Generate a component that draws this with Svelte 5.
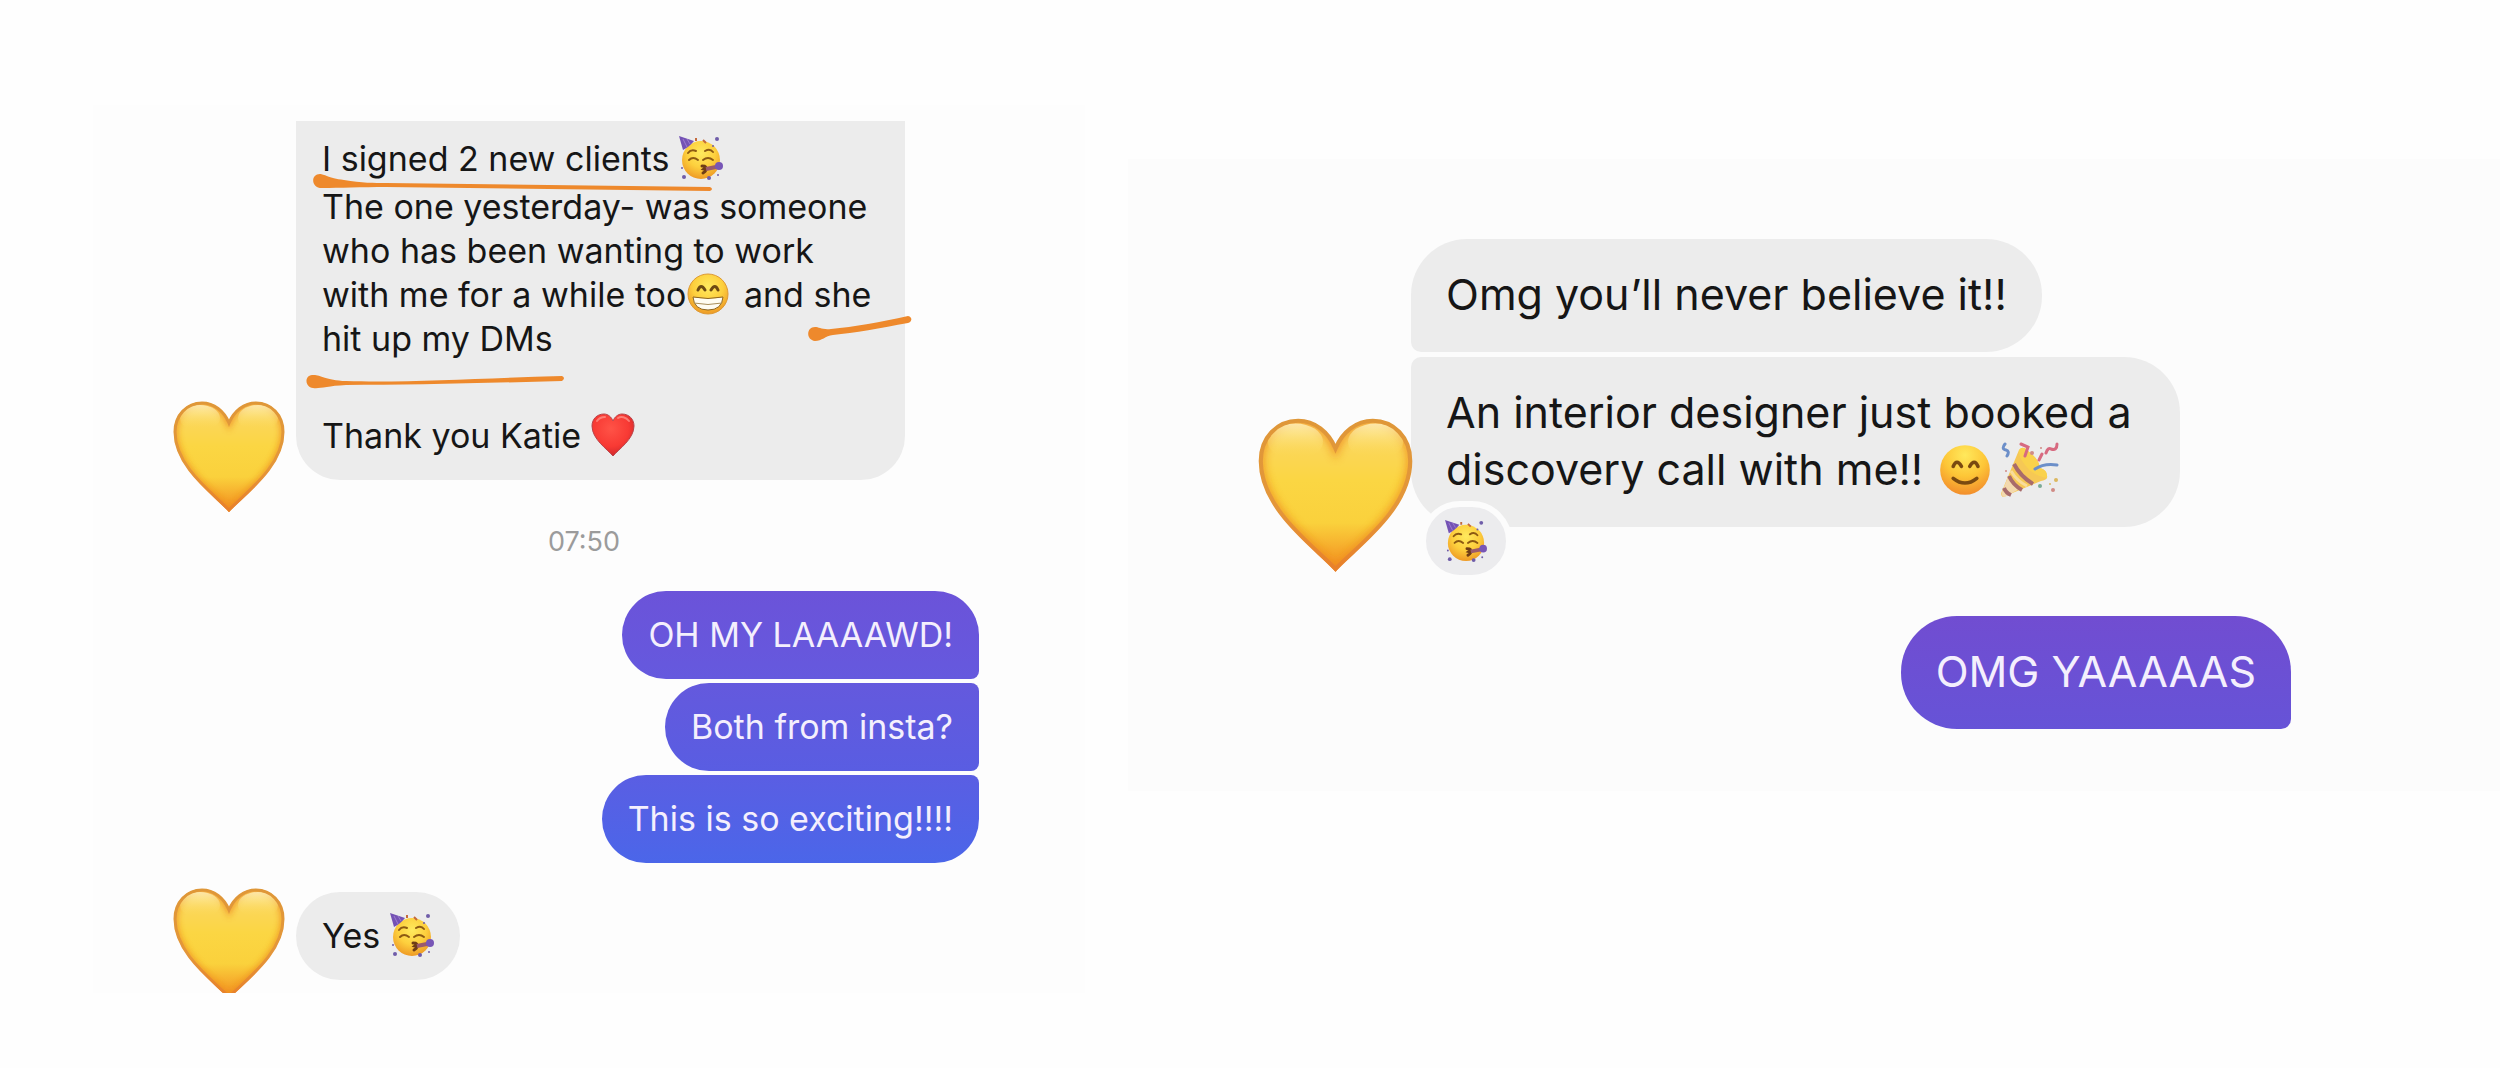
<script>
  const sent = [
    { text: 'OH MY LAAAAWD!', tone: 'violet' },
    { text: 'Both from insta?', tone: 'indigo' },
    { text: 'This is so exciting!!!!', tone: 'blue' },
  ];
</script>

{#snippet defs()}
  <svg class="defs" width="0" height="0" aria-hidden="true">
    <defs>
      <linearGradient id="gold" x1="0" y1="0" x2="0" y2="1">
        <stop offset="0" stop-color="#fbd66b" />
        <stop offset="0.4" stop-color="#fbd643" />
        <stop offset="0.68" stop-color="#fad13c" />
        <stop offset="1" stop-color="#f28a1e" />
      </linearGradient>
      <linearGradient id="goldEdge" x1="0" y1="0" x2="0" y2="1">
        <stop offset="0" stop-color="#df9738" />
        <stop offset="0.6" stop-color="#e4963a" />
        <stop offset="1" stop-color="#e8802a" />
      </linearGradient>
      <linearGradient id="shine" x1="0" y1="0" x2="0" y2="1">
        <stop offset="0" stop-color="#fff4c4" stop-opacity="0.8" />
        <stop offset="1" stop-color="#fbd643" stop-opacity="0" />
      </linearGradient>
      <radialGradient id="red" cx="0.45" cy="0.35" r="0.7">
        <stop offset="0" stop-color="#ff5347" />
        <stop offset="0.6" stop-color="#f83a34" />
        <stop offset="1" stop-color="#c9252a" />
      </radialGradient>
      <radialGradient id="face" cx="0.5" cy="0.32" r="0.68">
        <stop offset="0" stop-color="#ffea5e" />
        <stop offset="0.55" stop-color="#fdcf3d" />
        <stop offset="1" stop-color="#ee9a25" />
      </radialGradient>
      <radialGradient id="blush" cx="0.5" cy="0.2" r="0.85">
        <stop offset="0" stop-color="#ffe95c" />
        <stop offset="0.5" stop-color="#fdc637" />
        <stop offset="1" stop-color="#f1862a" />
      </radialGradient>
      <filter id="soft" x="-10%" y="-10%" width="120%" height="120%">
        <feGaussianBlur stdDeviation="3" />
      </filter>
      <clipPath id="heartClip">
        <path d="M56 111C41 94 2 66 2 31C2 13 14 1 29 1C41 1 51 9 56 21C61 9 71 1 83 1C98 1 110 13 110 31C110 66 71 94 56 111Z" />
      </clipPath>
    </defs>
  </svg>
{/snippet}

{#snippet goldHeart()}
  <svg class="avatar" viewBox="0 0 112 112" role="img" aria-label="Yellow heart">
    <path fill="url(#gold)" d="M56 111C41 94 1 66 1 31C1 13 14 1 29 1C41 1 51 9 56 21C61 9 71 1 83 1C98 1 111 13 111 31C111 66 71 94 56 111Z" />
    <g clip-path="url(#heartClip)">
      <path fill="none" stroke="#ee8b1d" stroke-width="7" opacity="0.8" filter="url(#soft)" d="M56 111C41 94 1 66 1 31C1 13 14 1 29 1C41 1 51 9 56 21C61 9 71 1 83 1C98 1 111 13 111 31C111 66 71 94 56 111Z" />
      <ellipse cx="27" cy="17" rx="20" ry="13" fill="url(#shine)" />
      <ellipse cx="85" cy="17" rx="20" ry="13" fill="url(#shine)" />
    </g>
    <path fill="none" stroke="url(#goldEdge)" stroke-width="3" d="M56 109C41 93 2 66 2 31C2 14 14 2 29 2C41 2 51 10 56 22C61 10 71 2 83 2C98 2 110 14 110 31C110 66 71 93 56 109Z" />
  </svg>
{/snippet}

{#snippet redHeart()}
  <svg class="emoji" viewBox="0 0 44 44" role="img" aria-label="Red heart">
    <path fill="url(#red)" stroke="#b9444a" stroke-width="1" d="M22 43C16 36 1 26 1 13C1 6 6 1 13 1C17 1 20.500 4 22 8C23.500 4 27 1 31 1C38 1 43 6 43 13C43 26 28 36 22 43Z" />
    <path fill="none" stroke="#ff9a90" stroke-width="2" stroke-linecap="round" opacity="0.7" d="M6 8C8 5 11 4 14 4M27 5C30 3 35 4 38 8" />
  </svg>
{/snippet}

{#snippet party()}
  <svg class="emoji" viewBox="0 0 44 44" role="img" aria-label="Partying face">
    <circle cx="22" cy="24" r="19" fill="url(#face)" />
    <path fill="#7452b4" d="M0 0L15 5C12 9 8 12 4 14Z" />
    <path fill="none" stroke="#9c7bd0" stroke-width="1" d="M4 3L8 11M8 3L11 8" />
    <path fill="none" stroke="#8d5a12" stroke-width="2" stroke-linecap="round" d="M9 17Q12 13 17 15M26 15Q31 12 34 16M10 24Q14 20 19 24M24 24Q29 20 34 24" />
    <path fill="none" stroke="#6f3d16" stroke-width="3" stroke-linecap="round" d="M23 30Q29 30 25 33Q29 34 24 37" />
    <path fill="none" stroke="#9b5a6c" stroke-width="4" d="M27 33L37 31" />
    <circle cx="40" cy="30" r="4" fill="#7856b6" />
    <path stroke="#c46a3c" stroke-width="2" d="M17 2L17 5M24 4L27 7" />
    <g fill="#6f5da9">
      <circle cx="38" cy="3" r="2" />
      <circle cx="34" cy="10" r="1" />
      <circle cx="3" cy="32" r="1" />
      <circle cx="5" cy="41" r="2" />
      <circle cx="30" cy="42" r="2" />
      <circle cx="39" cy="39" r="1" />
    </g>
  </svg>
{/snippet}

{#snippet grin()}
  <svg class="emoji tight" viewBox="0 0 44 44" role="img" aria-label="Beaming face">
    <circle cx="22" cy="22" r="20" fill="url(#face)" stroke="#dd9a35" stroke-width="1" />
    <path fill="none" stroke="#6e4a12" stroke-width="3" stroke-linecap="round" d="M12 18Q15 11 19 18M25 18Q29 11 32 18" />
    <path fill="#fffdf2" stroke="#8d6420" stroke-width="1" d="M7 25Q22 28 37 25Q36 38 22 38Q8 38 7 25Z" />
    <path fill="none" stroke="#a98f5b" stroke-width="1" d="M8 31Q22 34 36 31" />
  </svg>
{/snippet}

{#snippet smile()}
  <svg class="emoji" viewBox="0 0 44 44" role="img" aria-label="Smiling face">
    <circle cx="22" cy="22" r="21" fill="url(#blush)" />
    <path fill="none" stroke="#7a4a10" stroke-width="3" stroke-linecap="round" d="M12 19Q15 12 19 19M26 19Q30 12 33 19M12 29Q22 37 32 29" />
  </svg>
{/snippet}

{#snippet popper()}
  <svg class="emoji wide" viewBox="0 0 58 56" role="img" aria-label="Party popper">
    <path fill="#f6c855" d="M2 55Q-1 53 1 49L18 8Q22 3 27 9Q38 17 39 26Q47 28 46 36Q45 38 40 39Z" />
    <path fill="#f3d9ae" d="M1 50L7 35L20 46L4 55Q0 55 1 50Z" />
    <path fill="none" stroke="#a86b6b" stroke-width="4" d="M13 22Q19 34 32 42M8 34Q12 43 21 48M3 46Q5 51 10 53" />
    <path fill="none" stroke="#f8dc9c" stroke-width="3" d="M10 29Q16 39 26 44" />
    <path fill="#fad24c" d="M18 8Q22 3 27 9Q38 17 39 26Q47 28 46 36Q32 34 24 23Q17 14 18 8Z" />
    <g fill="none" stroke-width="3" stroke-linecap="round">
      <path stroke="#6c8fc9" d="M4 2Q0 7 5 8Q9 9 6 14M34 27Q43 21 56 23" />
      <path stroke="#d76a80" d="M20 2L27 5L24 14M56 2Q56 9 50 7Q47 5 45 11M41 12L38 18" />
    </g>
    <g fill="#d08b85">
      <circle cx="31" cy="11" r="2" />
      <circle cx="5" cy="29" r="1" />
      <circle cx="40" cy="6" r="1" />
      <circle cx="52" cy="48" r="2" />
    </g>
    <g fill="#dcb85f">
      <circle cx="55" cy="38" r="2" />
      <circle cx="49" cy="42" r="1" />
    </g>
    <circle cx="39" cy="44" r="2" fill="#7bab95" />
  </svg>
{/snippet}

{@render defs()}
<main class="page">
  <section class="panel first" aria-label="New clients conversation">
    <div class="incoming low">
      {@render goldHeart()}
      <div class="bubble received cut">
        <p class="headline">I signed 2 new clients {@render party()}</p>
        <p>The one yesterday- was someone<br />who has been wanting to work<br />with me for a while too{@render grin()} and she<br />hit up my DMs</p>
        <p class="thanks">Thank you Katie {@render redHeart()}</p>
        <svg class="marks" viewBox="0 0 640 359" aria-hidden="true">
          <path d="M24 53C28 53 32 57 48 59C66 62 78 62 90 62L414 66Q418 68 414 70L90 66C66 66 42 67 27 67C15 68 14 53 24 53Z" />
          <path d="M16 254C24 253 28 259 50 260C110 262 190 257 266 255Q270 257 266 260C190 262 110 264 50 264C30 265 24 268 17 267C9 266 8 255 16 254Z" />
          <path d="M519 206C523 206 526 209 535 208C558 206 585 201 612 195C617 196 616 201 612 202C585 207 558 212 537 214C529 215 526 220 519 220C510 219 510 206 519 206Z" />
        </svg>
      </div>
    </div>
    <time class="time" datetime="07:50">07:50</time>
    <div class="outgoing">
      {#each sent as message}
        <p class="bubble sent {message.tone}">{message.text}</p>
      {/each}
    </div>
    <div class="incoming reply">
      {@render goldHeart()}
      <p class="bubble received pill">Yes {@render party()}</p>
    </div>
  </section>

  <section class="panel second" aria-label="Discovery call conversation">
    <div class="incoming">
      {@render goldHeart()}
      <div class="stack">
        <p class="bubble received opener">Omg you’ll never believe it!!</p>
        <div class="bubble received closer">
          <p>An interior designer just booked a<br />discovery call with me!! {@render smile()}{@render popper()}</p>
          <span class="reaction">{@render party()}</span>
        </div>
      </div>
    </div>
    <div class="outgoing">
      <p class="bubble sent purple">OMG YAAAAAS</p>
    </div>
  </section>
</main>

<style>
  :global(body) {
    margin: 0;
    background: #fefefe;
  }
  p {
    margin: 0;
  }
  .defs {
    position: absolute;
  }
  .page {
    display: grid;
    grid-template-columns: 992fr 1372fr;
    gap: 43px;
    align-items: start;
    padding: 105px 0 76px 93px;
    font-family: Inter, "Liberation Sans", sans-serif;
    color: #161616;
  }
  .panel {
    box-sizing: border-box;
    overflow: hidden;
    background: #fdfdfd;
  }
  .first {
    padding: 16px 106px 13px 80px;
    font-size: 34px;
    line-height: 44px;
  }
  .second {
    margin-top: 54px;
    padding: 80px 209px 62px 130px;
    background: #fcfcfc;
    font-size: 43px;
    line-height: 57px;
  }
  .incoming {
    display: flex;
    align-items: flex-end;
  }
  .avatar {
    position: relative;
    z-index: 1;
    flex: none;
    display: block;
    width: 112px;
    height: 112px;
    margin: 0 11px -20px 0;
  }
  .low .avatar {
    margin-bottom: -33px;
  }
  .second .avatar {
    width: 155px;
    height: 155px;
    margin: 0 -2px -46px 0;
  }
  .bubble {
    position: relative;
    box-sizing: border-box;
    white-space: nowrap;
  }
  .first .bubble {
    padding: 22px 26px;
    border-radius: 44px;
  }
  .second .bubble {
    padding: 27px 35px 29px;
    border-radius: 56px;
  }
  .received {
    background: #ececec;
  }
  .first .cut {
    flex: 0 1 609px;
    padding-top: 16px;
    border-radius: 0 0 44px 44px;
  }
  .headline {
    margin-bottom: 4px;
  }
  .thanks {
    margin-top: 53px;
  }
  .marks {
    position: absolute;
    top: 0;
    left: 0;
    width: 640px;
    height: 359px;
    fill: #ee892c;
  }
  .emoji {
    display: inline-block;
    width: 44px;
    height: 44px;
    margin: -8px 0;
    vertical-align: -1px;
  }
  .tight {
    margin-right: 4px;
  }
  .second .emoji {
    width: 52px;
    height: 52px;
    margin: -8px 0 -8px 4px;
    vertical-align: -3px;
  }
  .second .wide {
    width: 58px;
    height: 56px;
    margin-left: 10px;
    vertical-align: -5px;
  }
  .time {
    display: block;
    margin: 46px 0 33px;
    padding-left: 16px;
    font-size: 27px;
    line-height: 32px;
    text-align: center;
    color: #9b9b9b;
  }
  .outgoing {
    display: flex;
    flex-direction: column;
    align-items: flex-end;
    gap: 4px;
  }
  .sent {
    color: #f4effd;
  }
  .first .violet {
    background: linear-gradient(#6b53d9, #6559de);
    border-bottom-right-radius: 8px;
  }
  .first .indigo {
    background: linear-gradient(#6459dd, #595de2);
    border-top-right-radius: 8px;
    border-bottom-right-radius: 8px;
  }
  .first .blue {
    background: linear-gradient(#5a5ee3, #4b66e9);
    border-top-right-radius: 8px;
  }
  .second .purple {
    background: linear-gradient(#714dd1, #6653d7);
    border-bottom-right-radius: 10px;
  }
  .reply {
    margin-top: 25px;
  }
  .stack {
    display: flex;
    flex: 0 1 769px;
    flex-direction: column;
    align-items: flex-start;
    gap: 5px;
  }
  .second .opener {
    border-bottom-left-radius: 10px;
  }
  .second .closer {
    align-self: stretch;
    border-top-left-radius: 10px;
  }
  .reaction {
    position: absolute;
    bottom: -54px;
    left: 9px;
    display: flex;
    align-items: center;
    justify-content: center;
    width: 80px;
    height: 68px;
    border: 6px solid #fcfcfc;
    border-radius: 41px;
    background: #ececee;
  }
  .second .reaction .emoji {
    width: 42px;
    height: 42px;
    margin: 0;
  }
  .second .outgoing {
    margin-top: 89px;
  }
</style>
